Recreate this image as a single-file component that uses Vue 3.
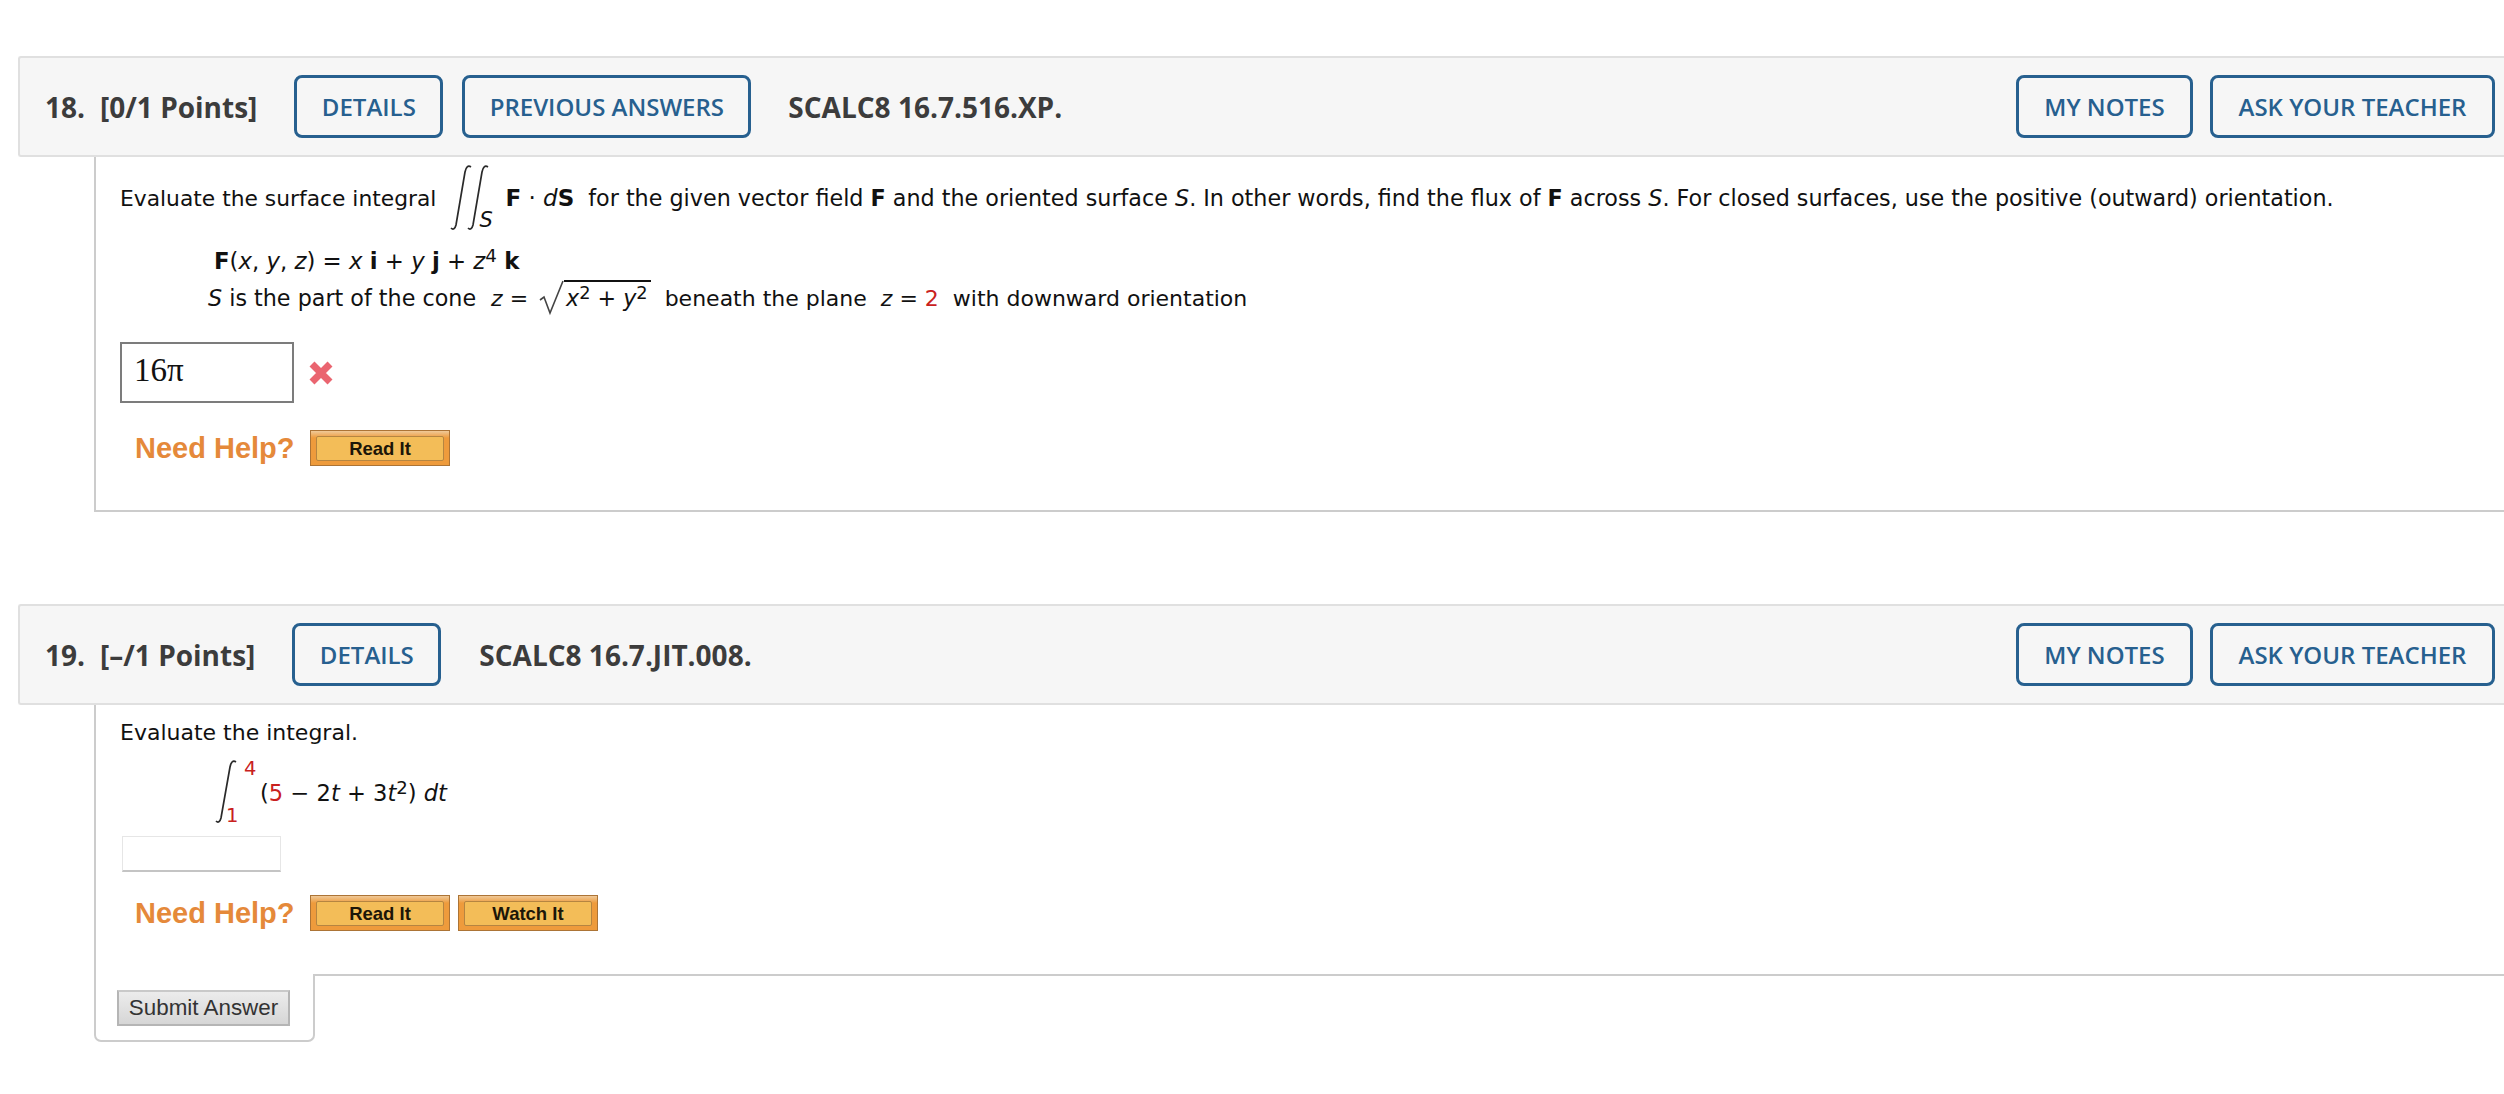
<script setup>
const notes = ['MY NOTES', 'ASK YOUR TEACHER']
</script>

<template>
  <div class="page">
    <!-- question 18 -->
    <div class="q-head">
      <span class="q-num">18.</span>
      <span class="q-points">[0/1 Points]</span>
      <a class="btn btn-details">DETAILS</a>
      <a class="btn btn-prev">PREVIOUS ANSWERS</a>
      <span class="q-code">SCALC8 16.7.516.XP.</span>
      <div class="q-right">
        <a v-for="n in notes" :key="n" class="btn" :class="n === 'MY NOTES' ? 'btn-notes' : 'btn-ask'">{{ n }}</a>
      </div>
    </div>
    <div class="q-body q-body-18">
      <div class="line line-first">
        <span class="eval-text">Evaluate the surface integral</span>
        <span class="dbl-int">
          <svg width="44" height="66" viewBox="0 0 44 66" fill="none" stroke="#2a2a2a" stroke-width="1.7">
            <path d="M1 63 C3 65 5 64 6 60 L15 7 C16 2 18 0 21 2" />
            <path d="M18 63 C20 65 22 64 23 60 L32 7 C33 2 35 0 38 2" />
          </svg>
          <i class="dbl-sub">S</i>
        </span>
        <span class="after-int"><b>F</b> · <i>d</i><b>S</b></span>
        <span class="gap-text long-text">for the given vector field <b>F</b> and the oriented surface <i>S</i>. In other words, find the flux of <b>F</b> across <i>S</i>. For closed surfaces, use the positive (outward) orientation.</span>
      </div>
      <div class="line line-f"><b>F</b>(<i>x</i>, <i>y</i>, <i>z</i>) = <i>x</i> <b>i</b> + <i>y</i> <b>j</b> + <i>z</i><sup>4</sup> <b>k</b></div>
      <div class="line line-s">
        <span class="cone-text"><i>S</i> is the part of the cone</span>
        <span class="gap-text gap-z"><i>z</i> =</span>
        <span class="root">
          <svg width="26" height="36" viewBox="0 0 26 36" fill="none" stroke="#444" stroke-width="1.6">
            <path d="M1 20 L5 17 L11 33 L24 1" />
          </svg>
          <span class="radicand"><i>x</i><sup>2</sup> + <i>y</i><sup>2</sup></span>
        </span>
        <span class="gap-text">beneath the plane</span>
        <span class="gap-text"><i>z</i> = <em class="red">2</em></span>
        <span class="gap-text">with downward orientation</span>
      </div>
      <div class="answer-row">
        <div class="answer-box">16π</div>
        <svg class="wrong" width="26" height="26" viewBox="0 0 26 26" fill="none" stroke="#ea6570" stroke-width="7">
          <path d="M4 4 L22 22 M22 4 L4 22" />
        </svg>
      </div>
      <div class="help-row help-18">
        <span class="help-label">Need Help?</span>
        <a class="read-btn"><span>Read It</span></a>
      </div>
    </div>

    <!-- question 19 -->
    <div class="q-head q-head-19">
      <span class="q-num">19.</span>
      <span class="q-points">[–/1 Points]</span>
      <a class="btn btn-details">DETAILS</a>
      <span class="q-code q-code-19">SCALC8 16.7.JIT.008.</span>
      <div class="q-right">
        <a v-for="n in notes" :key="n" class="btn" :class="n === 'MY NOTES' ? 'btn-notes' : 'btn-ask'">{{ n }}</a>
      </div>
    </div>
    <div class="q-body q-body-19">
      <div class="line line-eval">Evaluate the integral.</div>
      <div class="integral-row">
        <span class="single-int">
          <svg width="26" height="64" viewBox="0 0 26 64" fill="none" stroke="#2a2a2a" stroke-width="1.7">
            <path d="M1 61 C3 63 5 62 6 58 L15 7 C16 2 18 0 21 2" />
          </svg>
          <em class="red lim-top">4</em>
          <em class="red lim-bot">1</em>
        </span>
        <span class="integrand">(<em class="red">5</em> − 2<i>t</i> + 3<i>t</i><sup>2</sup>) <i>dt</i></span>
      </div>
      <div class="empty-input"></div>
      <div class="help-row help-19">
        <span class="help-label">Need Help?</span>
        <a class="read-btn"><span>Read It</span></a>
        <a class="read-btn"><span>Watch It</span></a>
      </div>
    </div>
    <div class="q-foot">
      <div class="submit-box">
        <button class="submit-btn">Submit Answer</button>
      </div>
      <div class="foot-rest"></div>
    </div>
  </div>
</template>

<style>
html, body {
  margin: 0;
  background: #fff;
}
</style>

<style scoped>
.page {
  width: 2504px;
  height: 1094px;
  padding-top: 56px;
  box-sizing: border-box;
  overflow: hidden;
  font-family: "DejaVu Sans", Verdana, sans-serif;
  font-size: 22px;
  color: #111;
}
.q-head {
  display: flex;
  align-items: center;
  height: 101px;
  margin-left: 18px;
  padding-left: 25px;
  box-sizing: border-box;
  background: #f6f6f6;
  border: 2px solid #e0e0e0;
  border-right: none;
  border-radius: 3px 0 0 3px;
  font-family: "Open Sans", sans-serif;
  font-weight: 700;
  font-size: 28px;
  color: #3c3c3c;
}
.q-head-19 {
  margin-top: 92px;
}
.q-points {
  margin-left: 15px;
}
.btn {
  display: flex;
  align-items: center;
  justify-content: center;
  height: 63px;
  box-sizing: border-box;
  border: 3px solid #27608f;
  border-radius: 8px;
  font-weight: 600;
  font-size: 24px;
  color: #27608f;
}
.btn-details {
  width: 149px;
  margin-left: 37px;
}
.btn-prev {
  width: 289px;
  margin-left: 19px;
}
.q-code {
  margin-left: 37px;
}
.q-code-19 {
  margin-left: 38px;
}
.q-right {
  display: flex;
  gap: 17px;
  margin-left: auto;
  margin-right: 9px;
}
.btn-notes {
  width: 177px;
}
.btn-ask {
  width: 285px;
}
.q-body {
  margin-left: 94px;
  border-left: 2px solid #ccc;
  padding-left: 24px;
}
.q-body-18 {
  height: 355px;
  box-sizing: border-box;
  border-bottom: 2px solid #ccc;
}
.q-body-19 {
  height: 269px;
  box-sizing: border-box;
}
.line {
  white-space: nowrap;
}
.line-first {
  display: flex;
  align-items: center;
  padding-top: 8px;
  height: 66px;
}
.eval-text {
  font-size: 21.8px;
}
.dbl-int {
  position: relative;
  display: flex;
  margin-left: 14px;
}
.dbl-sub {
  position: absolute;
  left: 29px;
  bottom: -1px;
  font-size: 21px;
}
.after-int {
  margin-left: 11px;
  font-size: 23px;
}
.gap-text {
  margin-left: 14px;
}
.long-text {
  font-size: 22.25px;
}
sup {
  font-size: 0.8em;
  line-height: 0;
  vertical-align: 0.38em;
}
em {
  font-style: normal;
}
.red {
  color: #c9211e;
}
.line-f {
  margin-left: 94px;
  margin-top: 16px;
  line-height: 28px;
  font-size: 22.8px;
}
.line-s {
  display: flex;
  align-items: center;
  margin-left: 88px;
  margin-top: 5px;
  height: 36px;
}
.cone-text {
  font-size: 22.25px;
}
.gap-z {
  margin-left: 15px;
}
.root {
  display: flex;
  align-items: flex-start;
  margin-left: 11px;
}
.radicand {
  border-top: 2px solid #111;
  line-height: 33px;
  padding: 0 3px 0 2px;
  margin-left: -1px;
  font-size: 22.2px;
}
.answer-row {
  display: flex;
  align-items: center;
  margin-top: 26px;
}
.answer-box {
  width: 174px;
  height: 61px;
  box-sizing: border-box;
  border: 2px solid #7c7c7c;
  padding-left: 12px;
  font-family: "Liberation Serif", serif;
  font-size: 33px;
  line-height: 52px;
  color: #111;
}
.wrong {
  margin-left: 14px;
  margin-top: 1px;
}
.help-row {
  display: flex;
  align-items: center;
  margin-left: 15px;
}
.help-18 {
  margin-top: 27px;
}
.help-label {
  width: 175px;
  font-family: "Liberation Sans", sans-serif;
  font-weight: 700;
  font-size: 29px;
  color: #e5893a;
}
.read-btn {
  display: flex;
  width: 140px;
  height: 36px;
  box-sizing: border-box;
  border: 1px solid #ac7436;
  padding: 5px 5px 4px;
  margin-right: 8px;
  background: linear-gradient(#efc998 0, #ee9b3c 7px);
  font-family: "Liberation Sans", sans-serif;
  font-weight: 700;
  font-size: 18.5px;
  color: #1c1608;
}
.read-btn span {
  flex: 1;
  display: flex;
  align-items: center;
  justify-content: center;
  background: #f3bd58;
  border: 1px solid #b58541;
  border-radius: 2px;
}
.line-eval {
  padding-top: 15px;
  line-height: 26px;
}
.integral-row {
  display: flex;
  align-items: center;
  margin-top: 14px;
  margin-left: 95px;
  height: 64px;
}
.single-int {
  position: relative;
  display: flex;
  width: 45px;
}
.lim-top {
  position: absolute;
  left: 29px;
  top: -3px;
  font-size: 19.5px;
}
.lim-bot {
  position: absolute;
  left: 11px;
  bottom: -3px;
  font-size: 19.5px;
}
.integrand {
  padding-top: 2px;
  font-size: 22.6px;
}
.empty-input {
  width: 159px;
  height: 36px;
  margin-left: 2px;
  margin-top: 12px;
  box-sizing: border-box;
  border: 1px solid #e6e6e6;
  border-bottom: 2px solid #c4c4c4;
}
.help-19 {
  margin-top: 23px;
}
.q-foot {
  display: flex;
  margin-left: 94px;
}
.submit-box {
  width: 221px;
  height: 68px;
  box-sizing: border-box;
  border: 2px solid #ccc;
  border-top: none;
  border-radius: 0 0 7px 7px;
  padding: 16px 0 0 21px;
}
.foot-rest {
  flex: 1;
  border-top: 2px solid #ccc;
}
.submit-btn {
  display: block;
  width: 173px;
  height: 36px;
  padding: 0;
  box-sizing: border-box;
  border: 2px solid #b5b5b5;
  border-top-color: #c9c9c9;
  background: linear-gradient(#ececec, #d6d6d6);
  font-family: "Liberation Sans", sans-serif;
  font-size: 22.4px;
  color: #333;
}
</style>
